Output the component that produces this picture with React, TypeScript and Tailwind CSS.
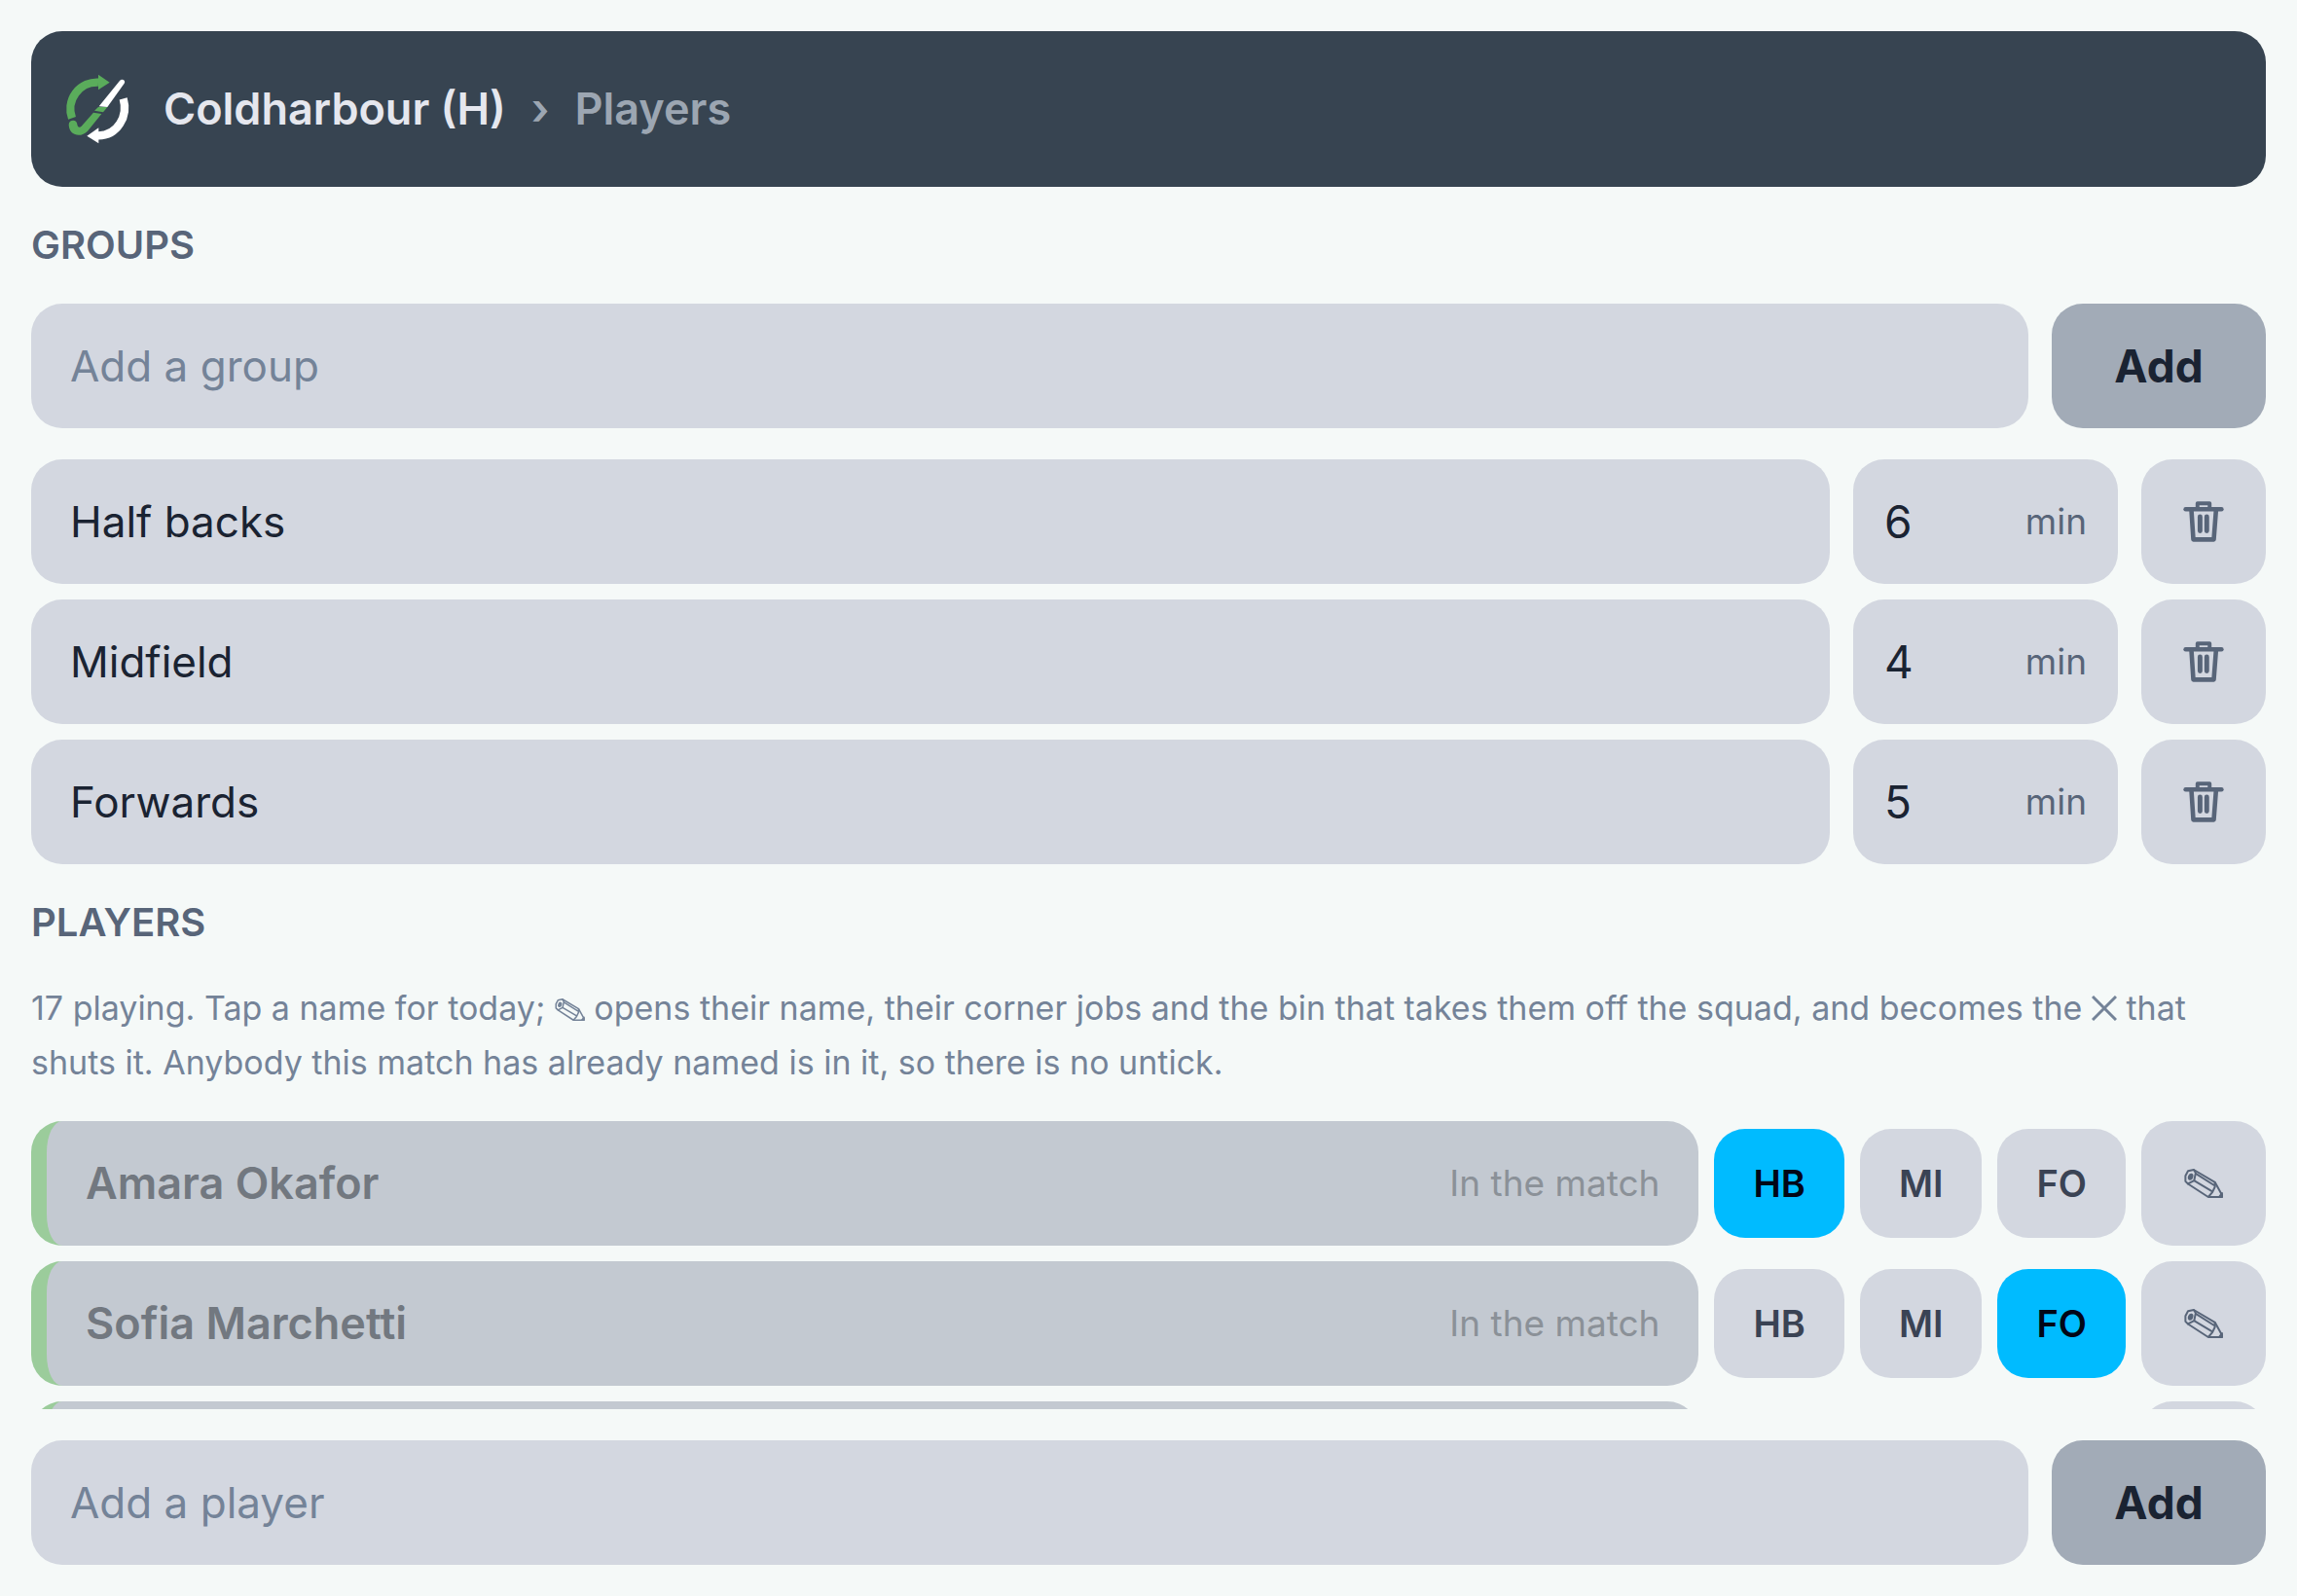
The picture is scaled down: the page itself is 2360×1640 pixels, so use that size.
import React, { useState } from 'react';
import clsx from 'clsx';

interface Group {
  id: string;
  code: string;
  name: string;
  minutes: string;
}

interface Player {
  id: number;
  name: string;
  group: string;
}

const INITIAL_GROUPS: Group[] = [
  { id: 'half-backs', code: 'HB', name: 'Half backs', minutes: '6' },
  { id: 'midfield', code: 'MI', name: 'Midfield', minutes: '4' },
  { id: 'forwards', code: 'FO', name: 'Forwards', minutes: '5' },
];

const INITIAL_PLAYERS: Player[] = [
  { id: 1, name: 'Amara Okafor', group: 'half-backs' },
  { id: 2, name: 'Sofia Marchetti', group: 'forwards' },
  { id: 3, name: '', group: 'midfield' },
];

const Logo = () => (
  <svg viewBox="42 48 216 216" className="size-18 shrink-0" aria-hidden="true">
    <path d="M153 74A82 82 0 0 0 72 184" fill="none" stroke="#5aac5b" strokeWidth="25" />
    <path d="M153 50L188 74L153 97Z" fill="#5aac5b" />
    <path d="M230 124C246 178 212 238 153 238" fill="none" stroke="#fff" strokeWidth="25" />
    <path d="M154 214L118 239L154 262Z" fill="#fff" />
    <path d="M155 148L219 69Q224 63 230 66Q237 70 233 77L181 150Z" fill="#fff" />
    <path d="M153 150L181 150L168 166L141 161Z" fill="#5aac5b" />
    <path
      d="M138 167L163 171L120 224C100 245 64 240 62 205C62 188 87 187 88 203C89 213 96 214 101 209Z"
      fill="#5aac5b"
    />
  </svg>
);

const TrashIcon = () => (
  <svg
    viewBox="68 74 128 128"
    className="size-[42px]"
    fill="none"
    stroke="currentColor"
    strokeLinecap="round"
    strokeLinejoin="round"
    aria-hidden="true"
  >
    <path d="M76 99H188" strokeWidth="14" />
    <path d="M113 97V81H151V97" strokeWidth="12" />
    <path d="M94 103L100 194H164L171 103" strokeWidth="14" />
    <path d="M121 123V167M142 123V167" strokeWidth="15" />
  </svg>
);

const PencilIcon = ({ className }: { className: string }) => (
  <svg
    viewBox="72 66 121 91"
    className={className}
    fill="none"
    stroke="currentColor"
    strokeWidth="6"
    strokeLinejoin="round"
    aria-hidden="true"
  >
    <path d="M84 73L102 69L108 79L103 103L84 113L76 105V88Z" />
    <path d="M102 69L168 108L190 148V154H147L84 113" />
    <path d="M108 81L168 119M103 103L160 137M168 108V122L160 139L147 154" />
    <path d="M190 142L181 154H190Z" fill="currentColor" />
    <ellipse cx="92" cy="91" rx="5" ry="8" transform="rotate(20 92 91)" fill="currentColor" />
  </svg>
);

const CrossIcon = () => (
  <svg
    viewBox="0 0 26 26"
    className="inline size-[26px] align-[-1px]"
    fill="none"
    stroke="currentColor"
    strokeWidth="3"
    aria-hidden="true"
  >
    <path d="M1 1L25 25M25 1L1 25" />
  </svg>
);

const SectionHeading = ({ children }: { children: React.ReactNode }) => (
  <h2 className="py-8 text-[40px] leading-14 font-semibold uppercase text-[#586579]">{children}</h2>
);

const AddForm = ({ label, onAdd }: { label: string; onAdd: (name: string) => void }) => {
  const [value, setValue] = useState('');

  const handleSubmit = (e: React.FormEvent) => {
    e.preventDefault();
    if (!value.trim()) return;
    onAdd(value.trim());
    setValue('');
  };

  return (
    <form onSubmit={handleSubmit} className="flex gap-6">
      <input
        type="text"
        aria-label={label}
        placeholder={label}
        value={value}
        onChange={(e) => setValue(e.target.value)}
        className="h-32 min-w-0 flex-1 rounded-4xl bg-[#d3d7e0] px-10 text-[44px] text-[#1a2332] outline-none placeholder:text-[#748398]"
      />
      <button type="submit" className="h-32 w-55 rounded-4xl bg-[#a2abb7] text-[46px] font-bold text-[#1a2332]">
        Add
      </button>
    </form>
  );
};

export default function App() {
  const [groups, setGroups] = useState(INITIAL_GROUPS);
  const [players, setPlayers] = useState(INITIAL_PLAYERS);

  const updateGroup = (id: string, field: 'name' | 'minutes', value: string) => {
    setGroups(groups.map((g) => (g.id === id ? { ...g, [field]: value } : g)));
  };

  const addGroup = (name: string) => {
    setGroups([...groups, { id: name, code: name.slice(0, 2).toUpperCase(), name, minutes: '5' }]);
  };

  return (
    <div className="flex h-screen flex-col bg-[#f5f9f8] p-8 font-[Inter,sans-serif]">
      <header className="flex h-40 shrink-0 items-center rounded-4xl bg-[#374451] px-8">
        <Logo />
        <nav className="ml-8 flex items-center text-[45px] font-semibold">
          <a href="#match" className="text-[#e5e7ee]">
            Coldharbour (H)
          </a>
          <span className="mx-[26px] text-[#9ca6b2]">›</span>
          <h1 className="text-[#9ca6b2]">Players</h1>
        </nav>
      </header>

      <SectionHeading>Groups</SectionHeading>
      <AddForm label="Add a group" onAdd={addGroup} />
      <ul className="mt-8 flex flex-col gap-4">
        {groups.map((group) => (
          <li key={group.id} className="flex gap-6">
            <input
              type="text"
              aria-label="Group name"
              value={group.name}
              onChange={(e) => updateGroup(group.id, 'name', e.target.value)}
              className="h-32 min-w-0 flex-1 rounded-4xl bg-[#d3d7e0] px-10 text-[44px] text-[#1a2332] outline-none"
            />
            <label className="flex h-32 w-68 items-center rounded-4xl bg-[#d3d7e0] px-8">
              <input
                type="text"
                inputMode="numeric"
                value={group.minutes}
                onChange={(e) => updateGroup(group.id, 'minutes', e.target.value)}
                className="min-w-0 flex-1 text-[46px] text-[#1a2332] outline-none"
              />
              <span className="text-[37px] text-[#586579]">min</span>
            </label>
            <button
              type="button"
              aria-label="Delete group"
              onClick={() => setGroups(groups.filter((g) => g.id !== group.id))}
              className="flex size-32 items-center justify-center rounded-4xl bg-[#d3d7e0] text-[#586579]"
            >
              <TrashIcon />
            </button>
          </li>
        ))}
      </ul>

      <SectionHeading>Players</SectionHeading>
      <p className="mb-8 text-[34px] leading-14 text-[#748398]">
        17 playing. Tap a name for today; <PencilIcon className="inline h-[23px] w-[31px] align-[-1px]" /> opens their
        name, their corner jobs and the bin that takes them off the squad, and becomes the <CrossIcon /> that shuts it.
        Anybody this match has already named is in it, so there is no untick.
      </p>

      <ul className="mb-8 flex min-h-0 flex-1 flex-col gap-4 overflow-y-auto [scrollbar-width:none]">
        {players.map((player) => (
          <li key={player.id} className="flex shrink-0 items-center gap-4">
            <button
              type="button"
              disabled
              className="flex h-32 min-w-0 flex-1 items-center justify-between rounded-4xl border-l-16 border-[#9bcc9b] bg-[#c3c9d1] px-10"
            >
              <span className="text-[45px] font-semibold text-[#727880]">{player.name}</span>
              <span className="text-[37px] text-[#8b9198]">In the match</span>
            </button>
            {groups.map((group) => (
              <button
                key={group.id}
                type="button"
                aria-pressed={player.group === group.id}
                onClick={() =>
                  setPlayers(players.map((p) => (p.id === player.id ? { ...p, group: group.id } : p)))
                }
                className={clsx(
                  'h-28 rounded-4xl px-10 text-[38px] font-semibold',
                  player.group === group.id ? 'bg-[#00bbff] text-[#020617]' : 'bg-[#d3d7e0] text-[#3a4354]',
                )}
              >
                {group.code}
              </button>
            ))}
            <button
              type="button"
              aria-label="Edit player"
              className="flex size-32 items-center justify-center rounded-4xl bg-[#d3d7e0] text-[#586579]"
            >
              <PencilIcon className="h-[30px] w-10" />
            </button>
          </li>
        ))}
      </ul>

      <AddForm
        label="Add a player"
        onAdd={(name) => setPlayers([...players, { id: players.length + 1, name, group: '' }])}
      />
    </div>
  );
}
